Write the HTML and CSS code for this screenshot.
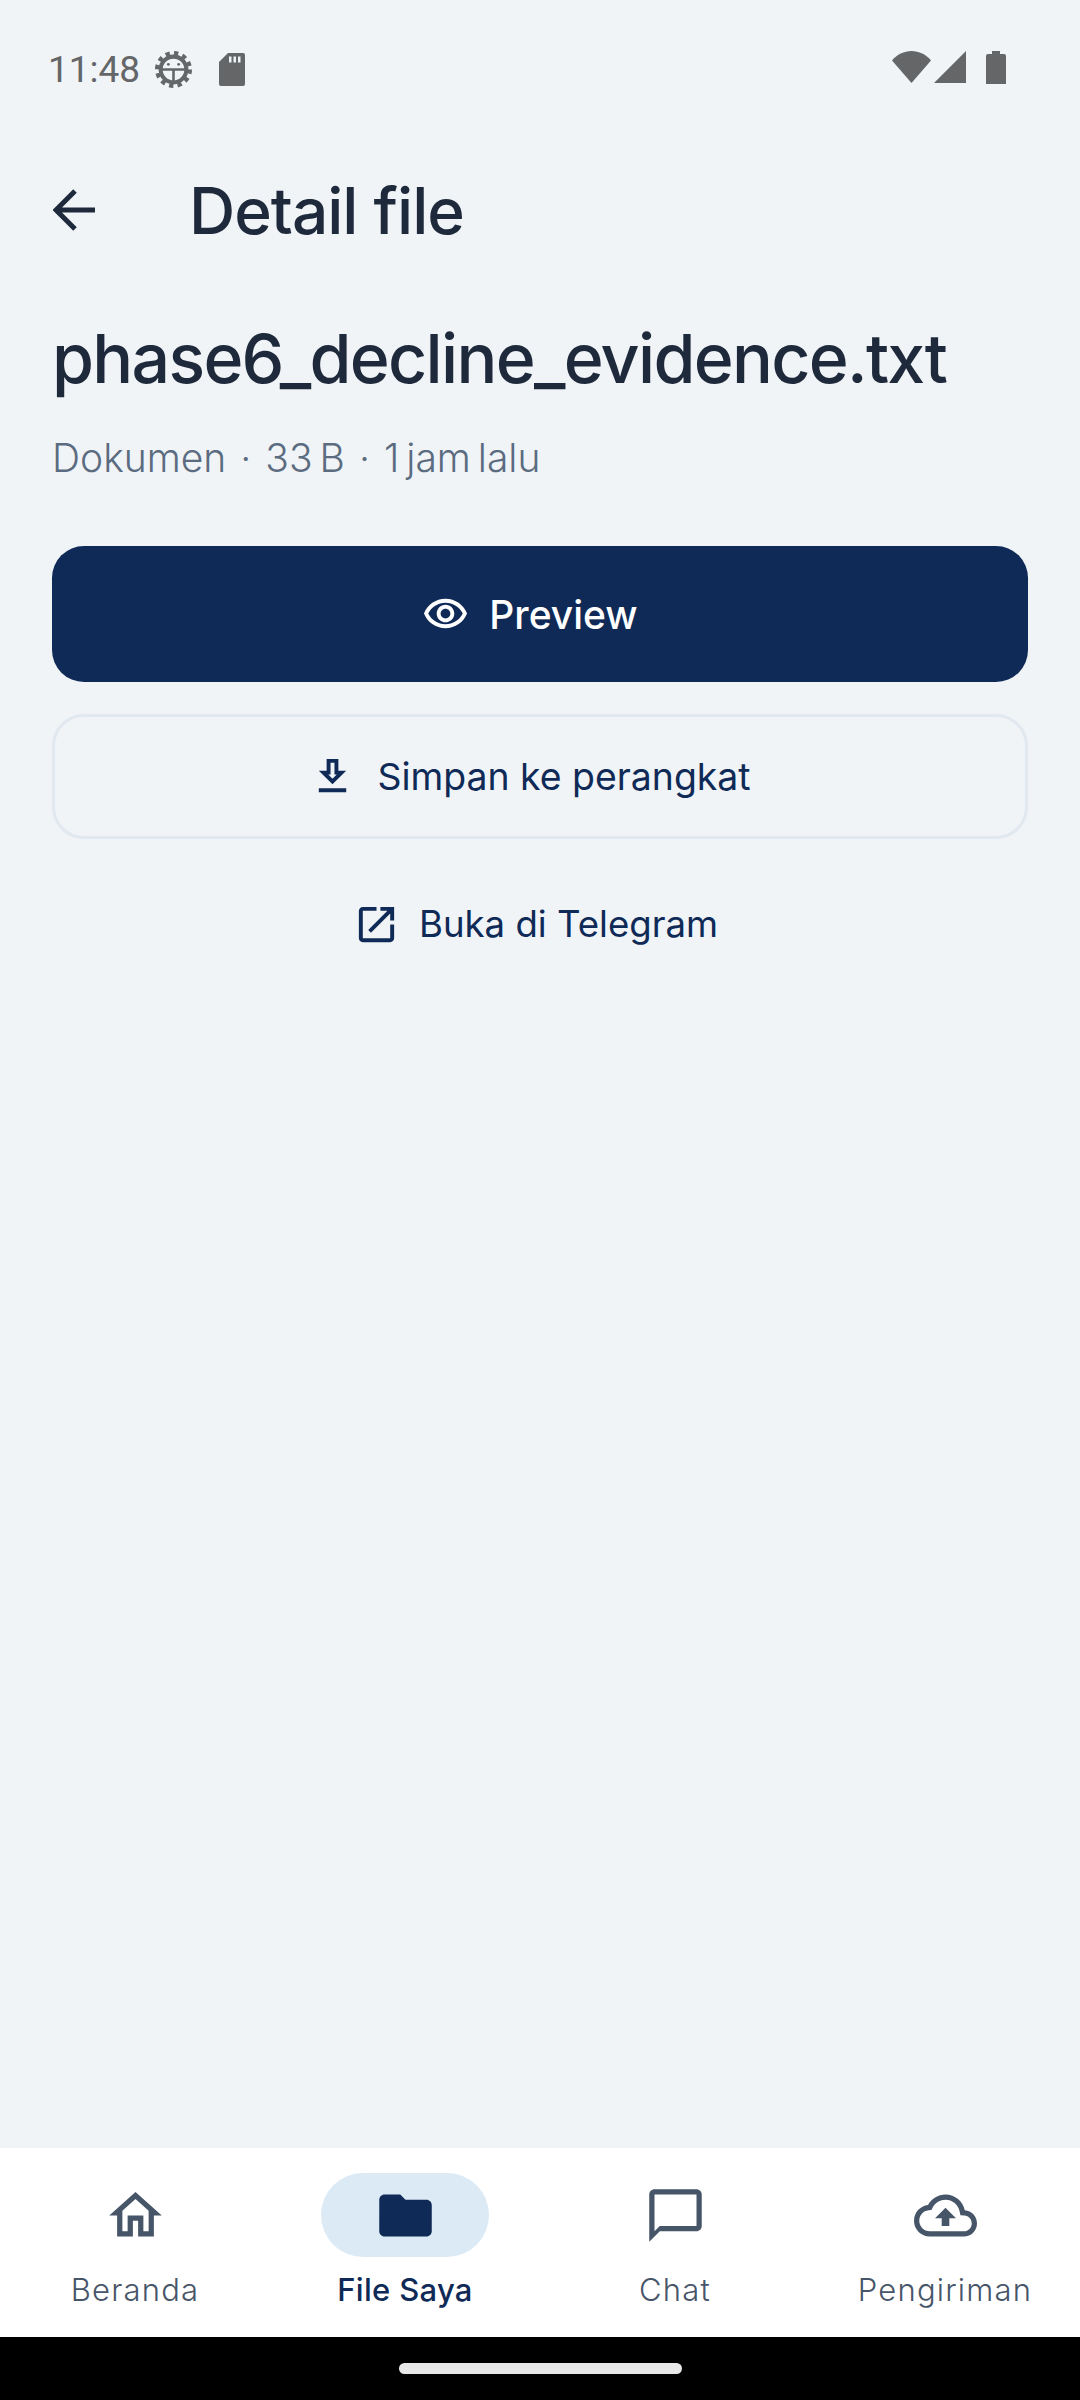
FILE: index.html
```html
<!DOCTYPE html>
<html lang="id">
<head>
    <meta charset="UTF-8">
    <title>Detail file</title>
    <link rel="stylesheet" href="styles.css">
</head>
<body>
<div class="phone">

    <div class="status-bar">
        <div class="status-left">
            <span class="clock">11:48</span>
            <svg class="gear" viewBox="0 0 36 36">
                <circle class="gear-teeth" cx="18" cy="18" r="16"/>
                <circle class="gear-ring" cx="18" cy="18" r="12.5"/>
                <path class="gear-t" d="M6 18h24M18 18v12"/>
                <circle class="gear-eye" cx="13" cy="13" r="1.4"/>
                <circle class="gear-eye" cx="23" cy="13" r="1.4"/>
            </svg>
            <svg class="sd" viewBox="0 0 26 33">
                <path d="M9 0h15a2 2 0 0 1 2 2v29a2 2 0 0 1-2 2H2a2 2 0 0 1-2-2V9z" fill="#646668"/>
                <path d="M10 3.500h2.500v6H10zM14.500 3.500H17v6h-2.500zM19 3.500h2.500v6H19z" fill="#f0f4f7"/>
            </svg>
        </div>
        <div class="status-right">
            <svg class="wifi" viewBox="0 0 39 32"><path d="M0 9.500C5 3.500 12 0 19.500 0S34 3.500 39 9.500L19.500 32z"/></svg>
            <svg class="signal" viewBox="0 0 32 32"><path d="M32 0v32H0z"/></svg>
            <svg class="battery" viewBox="0 0 20 33"><path d="M6 0h8v3h4a2 2 0 0 1 2 2v28H0V5a2 2 0 0 1 2-2h4z"/></svg>
        </div>
    </div>

    <div class="app-bar">
        <svg class="back" viewBox="0 0 42 42"><path d="M42 21H3M22 2L3 21l19 19"/></svg>
        <h1 class="title">Detail file</h1>
    </div>

    <div class="content">
        <h2 class="file-name">phase6_decline_evidence.txt</h2>
        <p class="meta"><span>Dokumen</span><span>·</span><span>33 B</span><span>·</span><span>1 jam lalu</span></p>

        <button class="btn btn-primary" type="button">
            <svg class="icon-18" viewBox="0 0 24 24"><path d="M12 6c3.790 0 7.170 2.130 8.820 5.500C19.170 14.870 15.790 17 12 17s-7.170-2.130-8.820-5.500C4.830 8.130 8.210 6 12 6m0-2C7 4 2.730 7.110 1 11.500 2.730 15.890 7 19 12 19s9.270-3.110 11-7.500C21.270 7.110 17 4 12 4zm0 5c1.380 0 2.500 1.120 2.500 2.500S13.380 14 12 14s-2.500-1.120-2.500-2.500S10.620 9 12 9m0-2c-2.480 0-4.500 2.020-4.500 4.500S9.520 16 12 16s4.500-2.020 4.500-4.500S14.480 7 12 7z"/></svg>
            <span>Preview</span>
        </button>

        <button class="btn btn-outline" type="button">
            <svg class="icon-18" viewBox="0 0 24 24"><path d="M19 9h-4V3H9v6H5l7 7 7-7zm-8 2V5h2v6h1.170L12 13.170 9.830 11H11zm-6 7h14v2H5z"/></svg>
            <span>Simpan ke perangkat</span>
        </button>

        <button class="btn btn-text" type="button">
            <svg class="icon-20" viewBox="0 0 24 24"><path d="M19 19H5V5h7V3H5c-1.110 0-2 .9-2 2v14c0 1.100.89 2 2 2h14c1.100 0 2-.9 2-2v-7h-2v7zM14 3v2h3.590l-9.830 9.830 1.410 1.410L19 6.410V10h2V3h-7z"/></svg>
            <span>Buka di Telegram</span>
        </button>
    </div>

    <nav class="bottom-nav">
        <a class="nav-item">
            <span class="nav-icon"><svg viewBox="0 0 24 24"><path d="M12 5.690l5 4.500V18h-2v-6H9v6H7v-7.810l5-4.500M12 3L2 12h3v8h6v-6h2v6h6v-8h3L12 3z"/></svg></span>
            <span class="nav-label">Beranda</span>
        </a>
        <a class="nav-item active">
            <span class="nav-icon"><svg viewBox="0 0 24 24"><path d="M10 4H4c-1.100 0-1.990.9-1.990 2L2 18c0 1.100.9 2 2 2h16c1.100 0 2-.9 2-2V8c0-1.100-.9-2-2-2h-8l-2-2z"/></svg></span>
            <span class="nav-label">File Saya</span>
        </a>
        <a class="nav-item">
            <span class="nav-icon"><svg viewBox="0 0 24 24"><path d="M20 2H4c-1.100 0-2 .9-2 2v18l4-4h14c1.100 0 2-.9 2-2V4c0-1.100-.9-2-2-2zm0 14H6l-2 2V4h16v12z"/></svg></span>
            <span class="nav-label">Chat</span>
        </a>
        <a class="nav-item">
            <span class="nav-icon"><svg viewBox="0 0 24 24"><path d="M19.350 10.040C18.670 6.590 15.640 4 12 4 9.110 4 6.600 5.640 5.350 8.040 2.340 8.360 0 10.910 0 14c0 3.310 2.690 6 6 6h13c2.760 0 5-2.240 5-5 0-2.640-2.050-4.780-4.650-4.960zM19 18H6c-2.210 0-4-1.790-4-4 0-2.050 1.530-3.760 3.560-3.970l1.070-.11.5-.95C8.080 7.140 9.940 6 12 6c2.620 0 4.880 1.860 5.390 4.430l.3 1.500 1.530.11c1.560.1 2.780 1.410 2.780 2.960 0 1.650-1.350 3-3 3zM8 13h2.550v3h2.900v-3H16l-4-4z"/></svg></span>
            <span class="nav-label">Pengiriman</span>
        </a>
    </nav>

    <div class="gesture-bar"><div class="gesture-pill"></div></div>
</div>
</body>
</html>
```

FILE: styles.css
```css
* {
    box-sizing: border-box;
}

body {
    margin: 0;
    font-family: 'Inter', 'Noto Sans', sans-serif;
    background-color: #f0f4f7;
}

.phone {
    width: 1080px;
    height: 2400px;
    display: flex;
    flex-direction: column;
    overflow: hidden;
}

/* status bar */
.status-bar {
    height: 138px;
    flex-shrink: 0;
    padding: 51px 74px 0 48px;
    display: flex;
    justify-content: space-between;
    align-items: flex-start;
}

.status-left {
    display: flex;
    align-items: center;
    height: 36px;
}

.clock {
    font-family: 'Roboto', sans-serif;
    font-size: 37px;
    color: #646668;
    width: 107px;
}

.gear {
    width: 37px;
    height: 37px;
    margin-right: 27px;
}

.gear-teeth {
    fill: none;
    stroke: #646668;
    stroke-width: 4;
    stroke-dasharray: 4.200 4.180;
}

.gear-ring {
    fill: none;
    stroke: #646668;
    stroke-width: 4;
}

.gear-t {
    fill: none;
    stroke: #646668;
    stroke-width: 2.500;
}

.gear-eye {
    fill: #646668;
}

.sd {
    width: 26px;
    height: 33px;
}

.status-right {
    display: flex;
    align-items: flex-start;
    fill: #646668;
}

.wifi {
    width: 39px;
    height: 32px;
    margin-right: 3px;
}

.signal {
    width: 32px;
    height: 32px;
    margin-right: 20px;
}

.battery {
    width: 20px;
    height: 33px;
}

/* app bar */
.app-bar {
    height: 144px;
    flex-shrink: 0;
    padding-left: 53px;
    display: flex;
    align-items: center;
}

.back {
    width: 42px;
    height: 42px;
    fill: none;
    stroke: #1e293b;
    stroke-width: 5;
}

.title {
    margin: 0 0 0 94px;
    font-size: 64px;
    font-weight: 500;
    letter-spacing: -1px;
    color: #1e293b;
}

/* main */
.content {
    flex: 1;
    padding: 32px 52px 0;
    display: flex;
    flex-direction: column;
}

.file-name {
    margin: 0;
    font-size: 68px;
    line-height: 88px;
    font-weight: 500;
    letter-spacing: -1.700px;
    color: #1e293b;
}

.meta {
    margin: 31px 0 0;
    height: 48px;
    display: flex;
    align-items: center;
    gap: 14px;
    font-size: 39px;
    word-spacing: -4px;
    font-weight: 300;
    color: #5b6b80;
}

.btn {
    width: 100%;
    font-family: inherit;
    display: flex;
    align-items: center;
    justify-content: center;
    border: 0;
    background: none;
    color: #0f2a56;
    fill: #0f2a56;
    font-size: 37px;
}

.btn-primary {
    height: 136px;
    margin-top: 65px;
    padding-right: 26px;
    border-radius: 32px;
    background-color: #0f2a56;
    color: #fff;
    fill: #fff;
    font-size: 39px;
    font-weight: 500;
    gap: 20px;
}

.btn-outline {
    height: 125px;
    margin-top: 32px;
    padding-right: 26px;
    border: 3px solid #e2e8f0;
    border-radius: 32px;
    gap: 21px;
    font-size: 37.400px;
}

.btn-text {
    height: 128px;
    margin-top: 21px;
    padding-right: 15px;
    gap: 19px;
    font-size: 36.600px;
}

.icon-18 {
    width: 47px;
    height: 47px;
}

.icon-20 {
    width: 47px;
    height: 47px;
}

/* bottom nav */
.bottom-nav {
    height: 189px;
    flex-shrink: 0;
    background-color: #fff;
    display: grid;
    grid-template-columns: repeat(4, 1fr);
    padding-top: 25px;
}

.nav-item {
    display: flex;
    flex-direction: column;
    align-items: center;
    color: #475569;
    fill: #475569;
}

.nav-icon {
    width: 168px;
    height: 84px;
    border-radius: 42px;
    display: flex;
    align-items: center;
    justify-content: center;
}

.nav-icon svg {
    width: 63px;
    height: 63px;
}

.nav-label {
    margin-top: 12px;
    font-size: 31px;
    line-height: 42px;
    font-weight: 300;
    letter-spacing: 1.200px;
}

.nav-item.active {
    color: #0f2a56;
    fill: #0f2a56;
}

.nav-item.active .nav-icon {
    background-color: #dceaf6;
}

.nav-item.active .nav-label {
    font-weight: 500;
    letter-spacing: 0.300px;
}

.gesture-bar {
    height: 63px;
    flex-shrink: 0;
    background-color: #000;
    display: flex;
    justify-content: center;
    padding-top: 26px;
}

.gesture-pill {
    width: 283px;
    height: 11px;
    border-radius: 6px;
    background-color: #e8e8e8;
}
```
